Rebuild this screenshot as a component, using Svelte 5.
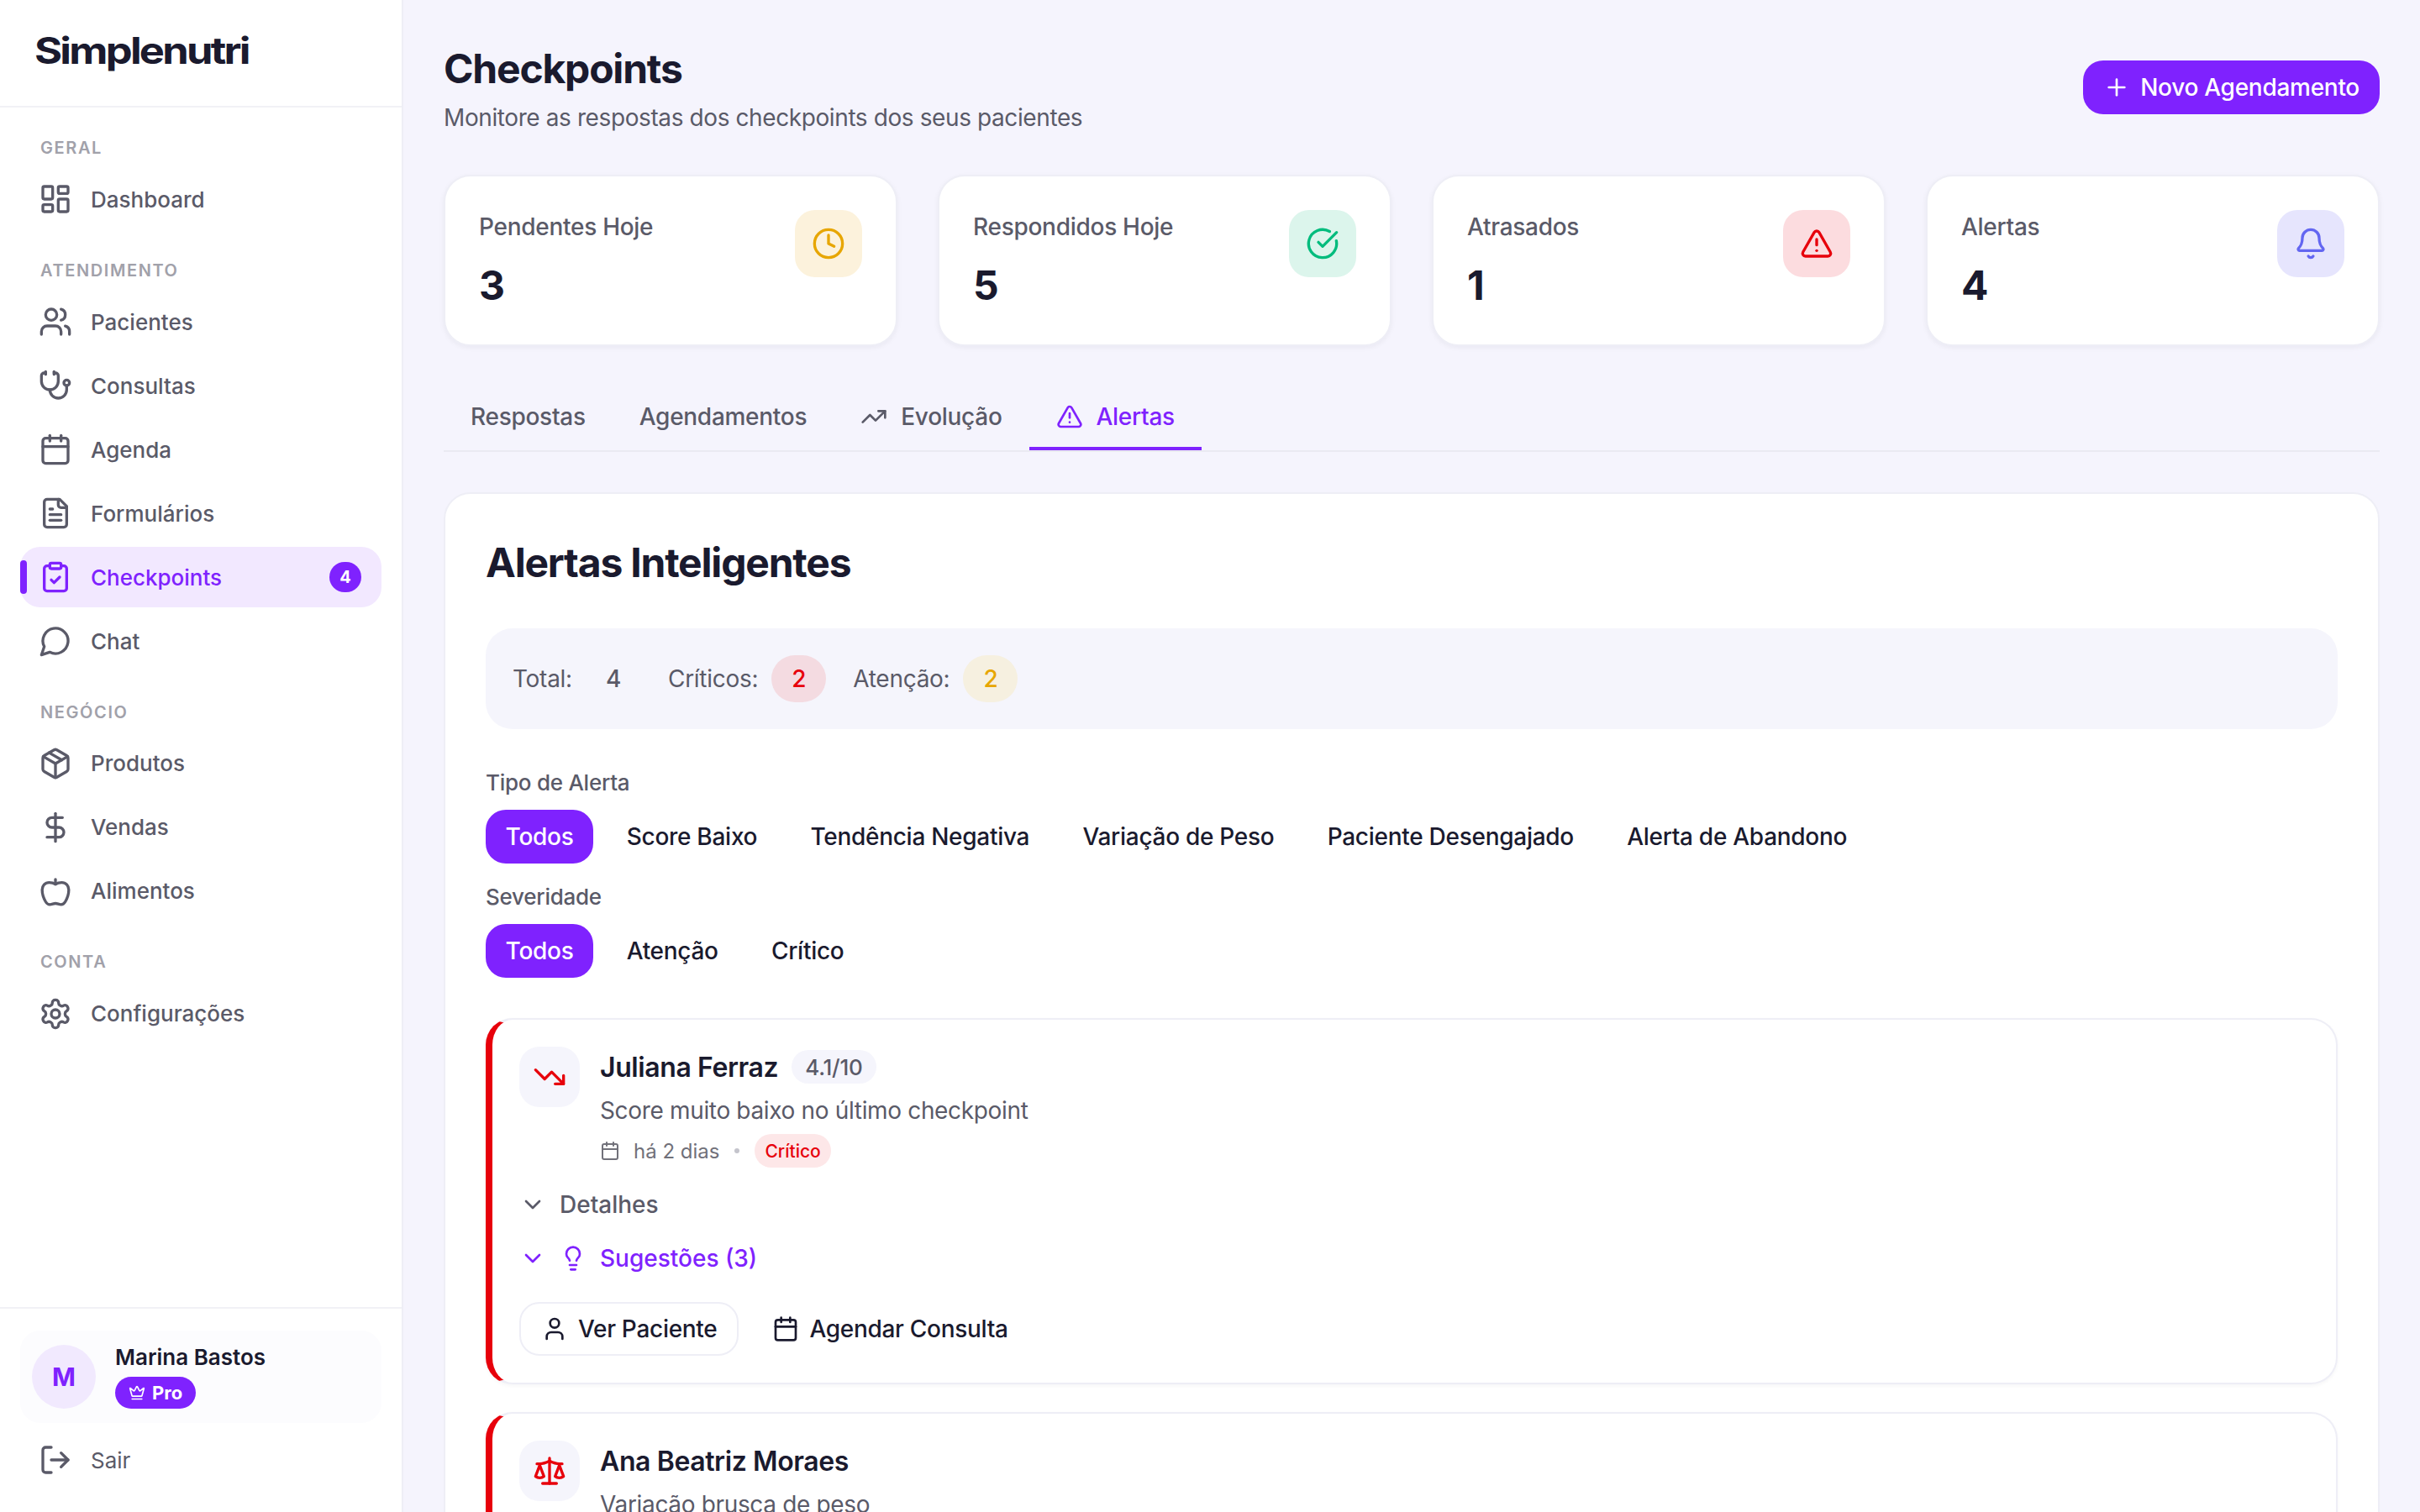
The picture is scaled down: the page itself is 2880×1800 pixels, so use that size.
<script>
  const paths = {
    dashboard: '<rect x="3" y="3" width="7" height="9" rx="1"/><rect x="14" y="3" width="7" height="5" rx="1"/><rect x="14" y="12" width="7" height="9" rx="1"/><rect x="3" y="16" width="7" height="5" rx="1"/>',
    users: '<path d="M16 21v-2a4 4 0 0 0-4-4H6a4 4 0 0 0-4 4v2"/><circle cx="9" cy="7" r="4"/><path d="M22 21v-2a4 4 0 0 0-3-3.87"/><path d="M16 3.13a4 4 0 0 1 0 7.75"/>',
    stethoscope: '<path d="M11 2v2"/><path d="M5 2v2"/><path d="M5 3H4a2 2 0 0 0-2 2v4a6 6 0 0 0 12 0V5a2 2 0 0 0-2-2h-1"/><path d="M8 15a6 6 0 0 0 12 0v-3"/><circle cx="20" cy="10" r="2"/>',
    calendar: '<path d="M8 2v4"/><path d="M16 2v4"/><rect x="3" y="4" width="18" height="18" rx="2"/><path d="M3 10h18"/>',
    file: '<path d="M15 2H6a2 2 0 0 0-2 2v16a2 2 0 0 0 2 2h12a2 2 0 0 0 2-2V7Z"/><path d="M14 2v4a2 2 0 0 0 2 2h4"/><path d="M10 9H8"/><path d="M16 13H8"/><path d="M16 17H8"/>',
    clipboard: '<rect x="8" y="2" width="8" height="4" rx="1"/><path d="M16 4h2a2 2 0 0 1 2 2v14a2 2 0 0 1-2 2H6a2 2 0 0 1-2-2V6a2 2 0 0 1 2-2h2"/><path d="m9 14 2 2 4-4"/>',
    chat: '<path d="M7.9 20A9 9 0 1 0 4 16.1L2 22Z"/>',
    box: '<path d="m7.5 4.27 9 5.15"/><path d="M21 8a2 2 0 0 0-1-1.73l-7-4a2 2 0 0 0-2 0l-7 4A2 2 0 0 0 3 8v8a2 2 0 0 0 1 1.73l7 4a2 2 0 0 0 2 0l7-4A2 2 0 0 0 21 16Z"/><path d="m3.3 7 8.7 5 8.7-5"/><path d="M12 22V12"/>',
    dollar: '<path d="M12 2v20"/><path d="M17 5H9.5a3.5 3.5 0 0 0 0 7h5a3.5 3.5 0 0 1 0 7H6"/>',
    apple: '<path d="M12 7c-1.2-.8-2.8-1.2-4.5-1.2C4.5 5.8 2.5 8 2.5 11c0 2.5 1 6 2.5 8.5.8 1.4 1.8 2 3 2 1.5 0 2.5-.8 4-.8s2.5.8 4 .8c1.2 0 2.2-.6 3-2 1.5-2.5 2.5-6 2.5-8.5 0-3-2-5.2-5-5.2-1.7 0-3.3.4-4.5 1.2Z"/><path d="M12 7V3.5"/>',
    settings: '<path d="M12.22 2h-.44a2 2 0 0 0-2 2v.18a2 2 0 0 1-1 1.73l-.43.25a2 2 0 0 1-2 0l-.15-.08a2 2 0 0 0-2.73.73l-.22.38a2 2 0 0 0 .73 2.73l.15.1a2 2 0 0 1 1 1.72v.51a2 2 0 0 1-1 1.74l-.15.09a2 2 0 0 0-.73 2.73l.22.38a2 2 0 0 0 2.73.73l.15-.08a2 2 0 0 1 2 0l.43.25a2 2 0 0 1 1 1.73V20a2 2 0 0 0 2 2h.44a2 2 0 0 0 2-2v-.18a2 2 0 0 1 1-1.73l.43-.25a2 2 0 0 1 2 0l.15.08a2 2 0 0 0 2.73-.73l.22-.39a2 2 0 0 0-.73-2.73l-.15-.08a2 2 0 0 1-1-1.74v-.5a2 2 0 0 1 1-1.74l.15-.09a2 2 0 0 0 .73-2.73l-.22-.38a2 2 0 0 0-2.73-.73l-.15.08a2 2 0 0 1-2 0l-.43-.25a2 2 0 0 1-1-1.73V4a2 2 0 0 0-2-2z"/><circle cx="12" cy="12" r="3"/>',
    logout: '<path d="m16 17 5-5-5-5"/><path d="M21 12H9"/><path d="M9 21H5a2 2 0 0 1-2-2V5a2 2 0 0 1 2-2h4"/>',
    crown: '<path d="M11.562 3.266a.5.5 0 0 1 .876 0L15.39 8.87a1 1 0 0 0 1.516.294L21.183 5.5a.5.5 0 0 1 .798.519l-2.834 10.246a1 1 0 0 1-.956.734H5.81a1 1 0 0 1-.957-.734L2.02 6.02a.5.5 0 0 1 .798-.519l4.276 3.664a1 1 0 0 0 1.516-.294z"/><path d="M5 21h14"/>',
    plus: '<path d="M5 12h14"/><path d="M12 5v14"/>',
    clock: '<circle cx="12" cy="12" r="10"/><polyline points="12 6 12 12 16 14"/>',
    check: '<path d="M21.801 10A10 10 0 1 1 17 3.335"/><path d="m9 11 3 3L22 4"/>',
    alert: '<path d="m21.73 18-8-14a2 2 0 0 0-3.48 0l-8 14A2 2 0 0 0 4 21h16a2 2 0 0 0 1.73-3"/><path d="M12 9v4"/><path d="M12 17h.01"/>',
    bell: '<path d="M10.268 21a2 2 0 0 0 3.464 0"/><path d="M3.262 15.326A1 1 0 0 0 4 17h16a1 1 0 0 0 .74-1.673C19.41 13.956 18 12.499 18 8A6 6 0 0 0 6 8c0 4.499-1.411 5.956-2.738 7.326"/>',
    up: '<path d="M16 7h6v6"/><path d="m22 7-8.5 8.5-5-5L2 17"/>',
    down: '<path d="M16 17h6v-6"/><path d="m22 17-8.5-8.5-5 5L2 7"/>',
    scale: '<path d="m16 16 3-8 3 8c-.87.65-1.92 1-3 1s-2.13-.35-3-1Z"/><path d="m2 16 3-8 3 8c-.87.65-1.92 1-3 1s-2.13-.35-3-1Z"/><path d="M7 21h10"/><path d="M12 3v18"/><path d="M3 7h2c2 0 5-1 7-2 2 1 5 2 7 2h2"/>',
    chevron: '<path d="m6 9 6 6 6-6"/>',
    bulb: '<path d="M15 14c.2-1 .7-1.7 1.5-2.5 1-.9 1.5-2.2 1.5-3.5A6 6 0 0 0 6 8c0 1 .2 2.2 1.5 3.5.7.7 1.3 1.5 1.5 2.5"/><path d="M9 18h6"/><path d="M10 22h4"/>',
    user: '<path d="M19 21v-2a4 4 0 0 0-4-4H9a4 4 0 0 0-4 4v2"/><circle cx="12" cy="7" r="4"/>'
  };

  const nav = [
    { title: 'Geral', items: [{ label: 'Dashboard', icon: 'dashboard' }] },
    {
      title: 'Atendimento',
      items: [
        { label: 'Pacientes', icon: 'users' },
        { label: 'Consultas', icon: 'stethoscope' },
        { label: 'Agenda', icon: 'calendar' },
        { label: 'Formulários', icon: 'file' },
        { label: 'Checkpoints', icon: 'clipboard', active: true, badge: 4 },
        { label: 'Chat', icon: 'chat' }
      ]
    },
    {
      title: 'Negócio',
      items: [
        { label: 'Produtos', icon: 'box' },
        { label: 'Vendas', icon: 'dollar' },
        { label: 'Alimentos', icon: 'apple' }
      ]
    },
    { title: 'Conta', items: [{ label: 'Configurações', icon: 'settings' }] }
  ];

  const stats = [
    { label: 'Pendentes Hoje', value: 3, icon: 'clock', tone: 'amber' },
    { label: 'Respondidos Hoje', value: 5, icon: 'check', tone: 'green' },
    { label: 'Atrasados', value: 1, icon: 'alert', tone: 'red' },
    { label: 'Alertas', value: 4, icon: 'bell', tone: 'indigo' }
  ];

  const tabs = [
    { label: 'Respostas' },
    { label: 'Agendamentos' },
    { label: 'Evolução', icon: 'up' },
    { label: 'Alertas', icon: 'alert', active: true }
  ];

  const tipos = ['Todos', 'Score Baixo', 'Tendência Negativa', 'Variação de Peso', 'Paciente Desengajado', 'Alerta de Abandono'];
  const severidades = ['Todos', 'Atenção', 'Crítico'];
</script>

{#snippet icon(name, size)}
  <svg class="icon" width={size} height={size} viewBox="0 0 24 24" fill="none" stroke="currentColor" stroke-width="2" stroke-linecap="round" stroke-linejoin="round">
    {@html paths[name]}
  </svg>
{/snippet}

<div class="layout">
  <aside class="sidebar">
    <div class="brand"><span class="logo">Simplenutri</span></div>

    <nav class="nav">
      {#each nav as section}
        <div class="section">
          <div class="section-title">{section.title}</div>
          <div class="section-items">
            {#each section.items as item}
              <div class="nav-item" class:active={item.active}>
                {@render icon(item.icon, 40)}
                <span>{item.label}</span>
                {#if item.badge}<span class="nav-badge">{item.badge}</span>{/if}
              </div>
            {/each}
          </div>
        </div>
      {/each}
    </nav>

    <div class="side-foot">
      <div class="user-card">
        <div class="avatar">M</div>
        <div class="user-info">
          <div class="user-name">Marina Bastos</div>
          <span class="plan">{@render icon('crown', 20)} Pro</span>
        </div>
      </div>
      <div class="nav-item logout">
        {@render icon('logout', 40)}
        <span>Sair</span>
      </div>
    </div>
  </aside>

  <main class="main">
    <header class="page-head">
      <div>
        <h1>Checkpoints</h1>
        <p>Monitore as respostas dos checkpoints dos seus pacientes</p>
      </div>
      <button class="primary">{@render icon('plus', 32)} Novo Agendamento</button>
    </header>

    <div class="stats">
      {#each stats as s}
        <div class="stat">
          <div>
            <div class="stat-label">{s.label}</div>
            <div class="stat-value">{s.value}</div>
          </div>
          <div class="stat-icon {s.tone}">{@render icon(s.icon, 40)}</div>
        </div>
      {/each}
    </div>

    <div class="tabs">
      {#each tabs as t}
        <div class="tab" class:active={t.active}>
          {#if t.icon}{@render icon(t.icon, 32)}{/if}
          <span>{t.label}</span>
        </div>
      {/each}
    </div>

    <section class="panel">
      <h2>Alertas Inteligentes</h2>

      <div class="summary">
        <div class="sum-item"><span>Total:</span><b class="pill">4</b></div>
        <div class="sum-item"><span>Críticos:</span><b class="pill crit">2</b></div>
        <div class="sum-item"><span>Atenção:</span><b class="pill warn">2</b></div>
      </div>

      <div class="filter-label first">Tipo de Alerta</div>
      <div class="chips">
        {#each tipos as c, i}<button class="chip" class:on={i === 0}>{c}</button>{/each}
      </div>
      <div class="filter-label">Severidade</div>
      <div class="chips">
        {#each severidades as c, i}<button class="chip" class:on={i === 0}>{c}</button>{/each}
      </div>

      <article class="alert">
        <div class="alert-top">
          <div class="alert-icon">{@render icon('down', 40)}</div>
          <div class="alert-body">
            <div class="alert-name">
              <strong>Juliana Ferraz</strong>
              <span class="score">4.1/10</span>
            </div>
            <div class="alert-msg">Score muito baixo no último checkpoint</div>
            <div class="alert-meta">
              {@render icon('calendar', 24)}
              <span class="when">há 2 dias</span>
              <span class="dot"></span>
              <span class="sev">Crítico</span>
            </div>
          </div>
        </div>
        <div class="fold">{@render icon('chevron', 32)}<span>Detalhes</span></div>
        <div class="fold tips">{@render icon('chevron', 32)}{@render icon('bulb', 32)}<span>Sugestões (3)</span></div>
        <div class="actions">
          <button class="act outline">{@render icon('user', 32)} Ver Paciente</button>
          <button class="act">{@render icon('calendar', 32)} Agendar Consulta</button>
        </div>
      </article>

      <article class="alert">
        <div class="alert-top">
          <div class="alert-icon">{@render icon('scale', 40)}</div>
          <div class="alert-body">
            <div class="alert-name"><strong>Ana Beatriz Moraes</strong></div>
            <div class="alert-msg">Variação brusca de peso</div>
          </div>
        </div>
      </article>
    </section>
  </main>
</div>

<style>
  :global(body) {
    margin: 0;
    background: #f5f4fd;
    font-family: Inter, 'Noto Sans', sans-serif;
    color: #1a1a2e;
  }

  .layout {
    display: flex;
    height: 1800px;
    overflow: hidden;
  }

  .icon { flex-shrink: 0; display: block; }

  /* sidebar */
  .sidebar {
    width: 480px;
    box-sizing: border-box;
    flex-shrink: 0;
    display: flex;
    flex-direction: column;
    background: #fff;
    border-right: 2px solid #eeeef6;
  }
  .brand {
    height: 128px;
    box-sizing: border-box;
    padding: 32px 0 0 41px;
    border-bottom: 2px solid #f1f1f6;
  }
  .logo {
    display: inline-block;
    font-size: 44px;
    line-height: 56px;
    font-weight: 700;
    letter-spacing: -2.4px;
    color: #1a1a2e;
    transform: scaleX(1.15);
    transform-origin: left;
  }
  .nav {
    flex: 1;
    padding: 34px 24px 0;
    display: flex;
    flex-direction: column;
    gap: 34.4px;
  }
  .section-title {
    font-size: 20px;
    line-height: 28px;
    font-weight: 600;
    letter-spacing: 1.6px;
    text-transform: uppercase;
    color: #a1a1aa;
    padding-left: 24px;
    margin-bottom: 11.4px;
  }
  .section-items {
    display: flex;
    flex-direction: column;
    gap: 4px;
  }
  .nav-item {
    position: relative;
    display: flex;
    align-items: center;
    gap: 22px;
    height: 72px;
    padding: 0 22px;
    border-radius: 24px;
    font-size: 26px;
    font-weight: 500;
    color: #5a5a68;
  }
  .nav-item.active {
    background: #f2e8ff;
    color: #7f22fe;
  }
  .nav-item.active::before {
    content: '';
    position: absolute;
    left: 0;
    top: 16px;
    width: 8px;
    height: 40px;
    border-radius: 4px;
    background: #7f22fe;
  }
  .nav-badge {
    margin-left: auto;
    margin-right: 2px;
    width: 38px;
    height: 36px;
    border-radius: 18px;
    background: #7f22fe;
    color: #fff;
    font-size: 20px;
    font-weight: 700;
    display: flex;
    align-items: center;
    justify-content: center;
  }
  .side-foot {
    border-top: 2px solid #f1f1f6;
    padding: 26px 24px 26px;
  }
  .user-card {
    display: flex;
    align-items: center;
    gap: 23px;
    height: 110px;
    padding: 0 14px;
    border-radius: 24px;
    background: #fcfcfe;
  }
  .avatar {
    width: 76px;
    height: 76px;
    border-radius: 50%;
    background: #f1e9fe;
    color: #7f22fe;
    font-size: 30px;
    font-weight: 700;
    display: flex;
    align-items: center;
    justify-content: center;
  }
  .user-name {
    font-size: 26px;
    line-height: 30px;
    font-weight: 600;
    color: #1a1a2e;
    margin-bottom: 8px;
  }
  .plan {
    display: inline-flex;
    align-items: center;
    gap: 8px;
    height: 38px;
    padding: 0 16px;
    border-radius: 19px;
    background: #7f22fe;
    color: #fff;
    font-size: 22px;
    font-weight: 700;
  }
  .logout { margin-top: 8px; font-weight: 400; }

  /* main */
  .main {
    flex: 1;
    min-width: 0;
    padding: 48px;
  }
  .page-head {
    display: flex;
    justify-content: space-between;
    align-items: center;
    height: 112px;
    margin-bottom: 48px;
  }
  h1 {
    margin: 2px 0 0;
    font-size: 48px;
    line-height: 64px;
    font-weight: 700;
    letter-spacing: -1.2px;
    color: #1a1a2e;
  }
  .page-head p {
    margin: 6px 0 0;
    font-size: 28px;
    line-height: 40px;
    letter-spacing: -0.4px;
    color: #5a5a68;
  }
  button {
    font-family: inherit;
    border: none;
    background: none;
    cursor: pointer;
  }
  .primary {
    display: flex;
    align-items: center;
    gap: 12px;
    height: 64px;
    padding: 0 24px;
    border-radius: 24px;
    background: #7f22fe;
    color: #fff;
    font-size: 28px;
    font-weight: 500;
    letter-spacing: -0.28px;
  }

  .stats {
    display: grid;
    grid-template-columns: repeat(4, 1fr);
    gap: 48px;
    margin-bottom: 44px;
  }
  .stat {
    display: flex;
    justify-content: space-between;
    align-items: flex-start;
    box-sizing: border-box;
    height: 204px;
    padding: 40px;
    background: #fff;
    border: 2px solid #eeeef6;
    border-radius: 32px;
    box-shadow: 0 2px 6px rgba(26, 26, 46, 0.05);
  }
  .stat-label {
    font-size: 28px;
    line-height: 40px;
    font-weight: 500;
    letter-spacing: -0.28px;
    color: #5a5a68;
  }
  .stat-value {
    margin-top: 14px;
    font-size: 48px;
    line-height: 72px;
    font-weight: 700;
    color: #1a1a2e;
  }
  .stat-icon {
    width: 80px;
    height: 80px;
    border-radius: 24px;
    display: flex;
    align-items: center;
    justify-content: center;
  }
  .stat-icon.amber { background: #fcf2dc; color: #e7a600; }
  .stat-icon.green { background: #dcf5ec; color: #00bc7d; }
  .stat-icon.red { background: #fcdcdf; color: #e7000b; }
  .stat-icon.indigo { background: #e6e5fd; color: #6366f1; }

  .tabs {
    display: flex;
    height: 82px;
    box-sizing: border-box;
    border-bottom: 2px solid #eaeaf2;
    margin-bottom: 48px;
  }
  .tab {
    display: flex;
    align-items: center;
    gap: 16px;
    height: 80px;
    box-sizing: border-box;
    padding: 0 32px;
    font-size: 28px;
    font-weight: 500;
    letter-spacing: -0.28px;
    color: #5a5a68;
  }
  .tab.active {
    color: #7f22fe;
    border-bottom: 4px solid #7f22fe;
    padding-top: 4px;
  }

  .panel {
    background: #fff;
    border: 2px solid #eeeef6;
    border-radius: 32px;
    padding: 50px 48px 48px;
  }
  h2 {
    margin: 0 0 46px;
    font-size: 48px;
    line-height: 64px;
    font-weight: 700;
    letter-spacing: -1.2px;
    color: #1a1a2e;
  }
  .summary {
    display: flex;
    align-items: center;
    gap: 32px;
    height: 120px;
    box-sizing: border-box;
    padding: 0 32px;
    background: #f5f5fc;
    border-radius: 32px;
    margin-bottom: 46px;
  }
  .sum-item {
    display: flex;
    align-items: center;
    gap: 16px;
    font-size: 28px;
    letter-spacing: -0.28px;
    color: #5a5a68;
  }
  .pill {
    height: 56px;
    padding: 0 24px;
    border-radius: 28px;
    display: flex;
    align-items: center;
    font-weight: 500;
  }
  .pill.crit { background: #f4dbe1; color: #e7000b; }
  .pill.warn { background: #f6f0e0; color: #e7a600; }

  .filter-label {
    font-size: 26px;
    line-height: 36px;
    font-weight: 500;
    letter-spacing: -0.26px;
    color: #5a5a68;
    margin: 22px 0 14px;
  }
  .filter-label.first { margin-top: 0; }
  .chips {
    display: flex;
    gap: 16px;
  }
  .chip {
    height: 64px;
    padding: 0 23.6px;
    border-radius: 24px;
    font-size: 28px;
    font-weight: 500;
    letter-spacing: -0.28px;
    color: #1a1a2e;
  }
  .chip.on {
    background: #7f22fe;
    color: #fff;
  }

  .alert {
    margin-top: 48px;
    background: #fff;
    border: 2px solid #eeeef6;
    border-left: 8px solid #e7000b;
    border-radius: 32px;
    padding: 32px;
    box-shadow: 0 2px 4px rgba(26, 26, 46, 0.04);
  }
  .alert + .alert { margin-top: 33px; }
  .alert-top {
    display: flex;
    gap: 24px;
  }
  .alert-icon {
    width: 72px;
    height: 72px;
    border-radius: 24px;
    background: #f5f5fc;
    color: #e7000b;
    display: flex;
    align-items: center;
    justify-content: center;
    flex-shrink: 0;
  }
  .alert-name {
    display: flex;
    align-items: center;
    gap: 16px;
    height: 48px;
  }
  .alert-name strong {
    font-size: 32px;
    font-weight: 600;
    letter-spacing: -0.4px;
    color: #1a1a2e;
  }
  .score {
    height: 40px;
    padding: 0 16px;
    border-radius: 20px;
    background: #f5f5fc;
    color: #5a5a68;
    font-size: 26px;
    font-weight: 500;
    letter-spacing: -0.26px;
    display: flex;
    align-items: center;
  }
  .alert-msg {
    margin-top: 8px;
    font-size: 28px;
    line-height: 40px;
    letter-spacing: -0.34px;
    color: #5a5a68;
  }
  .alert-meta {
    margin-top: 8px;
    display: flex;
    align-items: center;
    gap: 16px;
    height: 40px;
    font-size: 24px;
    color: #71717a;
  }
  .dot {
    width: 6px;
    height: 6px;
    margin: 0 2px;
    border-radius: 50%;
    background: #c4c4cc;
  }
  .sev {
    height: 40px;
    padding: 0 12px;
    border-radius: 20px;
    background: #fde7e8;
    color: #e7000b;
    font-size: 21px;
    font-weight: 500;
    display: flex;
    align-items: center;
  }
  .fold {
    display: flex;
    align-items: center;
    gap: 16px;
    height: 40px;
    margin-top: 24px;
    font-size: 28px;
    font-weight: 500;
    color: #5a5a68;
  }
  .fold.tips {
    color: #7f22fe;
    margin-top: 24px;
  }
  .actions {
    display: flex;
    gap: 16px;
    margin-top: 32px;
  }
  .act {
    display: flex;
    align-items: center;
    gap: 12px;
    height: 64px;
    padding: 0 24px;
    border-radius: 24px;
    font-size: 28px;
    font-weight: 500;
    letter-spacing: -0.3px;
    color: #1a1a2e;
  }
  .act.outline {
    box-sizing: border-box;
    border: 2px solid #eeeef6;
  }
</style>
